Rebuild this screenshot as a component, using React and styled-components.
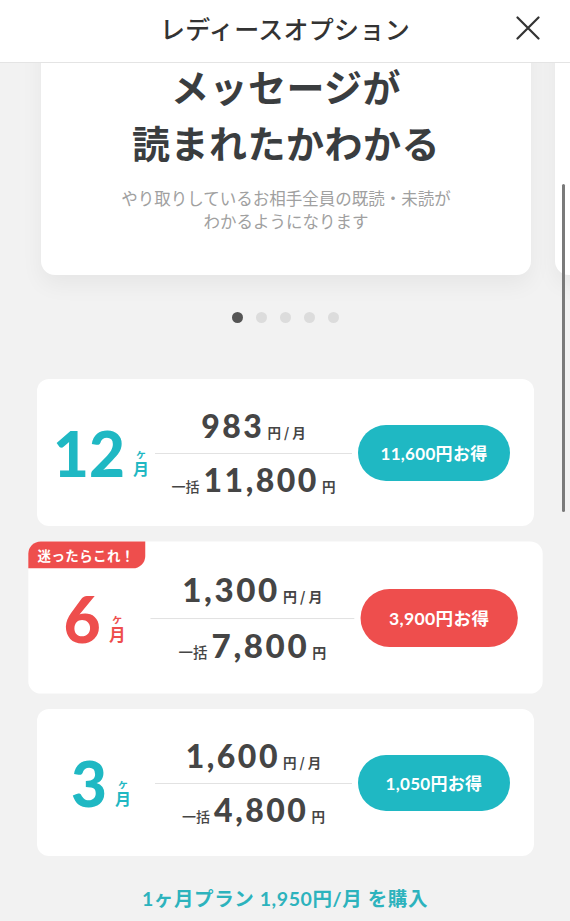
import React from "react";
import styled, { createGlobalStyle } from "styled-components";

const JP = `"Noto Sans CJK JP", "Noto Sans", sans-serif`;
const NUM = `Lato, "Noto Sans CJK JP", sans-serif`;
const TEAL = "#1fb8c3";
const RED = "#ee4e4d";

const plans = [
  { months: "12", monthly: "983", total: "11,800", saving: "11,600円お得", color: TEAL },
  { months: "6", monthly: "1,300", total: "7,800", saving: "3,900円お得", color: RED, badge: "迷ったらこれ！" },
  { months: "3", monthly: "1,600", total: "4,800", saving: "1,050円お得", color: TEAL },
];

const GlobalStyle = createGlobalStyle`
  * { box-sizing: border-box; }
  body {
    margin: 0;
    background: #f2f2f2;
    font-family: ${JP};
  }
`;

const App = () => {
  return (
    <>
      <GlobalStyle />
      <Screen>
        <Header>
          <span />
          <Title>レディースオプション</Title>
          <CloseButton aria-label="閉じる">
            <svg width="24" height="24" viewBox="0 0 24 24">
              <path d="M1.5 1.5 22.5 22.5M22.5 1.5 1.5 22.5" stroke="#333" strokeWidth="2.2" strokeLinecap="round" fill="none" />
            </svg>
          </CloseButton>
        </Header>

        <Viewport>
          <Content>
            <Carousel>
              <Slide>
                <SlideTitle>
                  メッセージが
                  <br />
                  読まれたかわかる
                </SlideTitle>
                <SlideText>
                  やり取りしているお相手全員の既読・未読が
                  <br />
                  わかるようになります
                </SlideText>
              </Slide>
              <Slide />
            </Carousel>

            <Dots>
              {[0, 1, 2, 3, 4].map((i) => (
                <Dot key={i} active={i === 0} />
              ))}
            </Dots>

            <PlanList>
              {plans.map((p) => (
                <PlanCard key={p.months} featured={!!p.badge}>
                  {p.badge && <Badge>{p.badge}</Badge>}
                  <Months color={p.color}>
                    <MonthNumber>{p.months}</MonthNumber>
                    <MonthUnit>
                      <small>ヶ</small>
                      <span>月</span>
                    </MonthUnit>
                  </Months>
                  <Prices>
                    <PriceRow>
                      <Amount>{p.monthly}</Amount>
                      <Unit>円 / 月</Unit>
                    </PriceRow>
                    <Divider />
                    <PriceRow>
                      <Prefix>一括</Prefix>
                      <Amount>{p.total}</Amount>
                      <Unit>円</Unit>
                    </PriceRow>
                  </Prices>
                  <SaveButton color={p.color}>{p.saving}</SaveButton>
                </PlanCard>
              ))}
            </PlanList>

            <MonthlyLink>1ヶ月プラン 1,950円/月 を購入</MonthlyLink>
          </Content>
          <ScrollIndicator />
        </Viewport>
      </Screen>
    </>
  );
};

const Screen = styled.div`
  width: 570px;
  height: 921px;
  display: flex;
  flex-direction: column;
  overflow: hidden;
  background: #f2f2f2;
`;

const Header = styled.header`
  flex-shrink: 0;
  height: 63px;
  padding-bottom: 6px;
  display: grid;
  grid-template-columns: 1fr auto 1fr;
  align-items: center;
  background: #fff;
  border-bottom: 1px solid #e4e4e4;
  position: relative;
  z-index: 2;
`;

const Title = styled.h1`
  margin: 0;
  font-size: 25px;
  font-weight: 500;
  color: #333;
  letter-spacing: 0.3px;
`;

const CloseButton = styled.button`
  justify-self: end;
  margin-right: 30px;
  padding: 0;
  border: 0;
  background: none;
  display: flex;
  cursor: pointer;
`;

const Viewport = styled.div`
  flex: 1;
  overflow: hidden;
  position: relative;
`;

const Content = styled.div`
  margin-top: -40px;
`;

const Carousel = styled.div`
  display: flex;
  gap: 24px;
  padding-left: 41px;
`;

const Slide = styled.div`
  flex-shrink: 0;
  width: 490px;
  padding: 35px 20px 42px;
  background: #fff;
  border-radius: 14px;
  box-shadow: 0 10px 22px rgba(0, 0, 0, 0.05);
  text-align: center;
`;

const SlideTitle = styled.h2`
  margin: 0;
  font-size: 38px;
  line-height: 56px;
  font-weight: 700;
  color: #3a3d3f;
  letter-spacing: 0.5px;
`;

const SlideText = styled.p`
  margin: 17px 0 0;
  font-size: 16.5px;
  line-height: 23px;
  color: #a0a0a0;
`;

const Dots = styled.div`
  display: flex;
  justify-content: center;
  gap: 13px;
  margin-top: 37px;
`;

const Dot = styled.span`
  width: 11px;
  height: 11px;
  border-radius: 50%;
  background: ${({ active }) => (active ? "#555" : "#dcdcdc")};
`;

const PlanList = styled.div`
  display: flex;
  flex-direction: column;
  gap: 18px;
  margin: 56px 36px 0 37px;
`;

const PlanCard = styled.div`
  position: relative;
  height: 147px;
  display: grid;
  grid-template-columns: 104px 197px 152px;
  column-gap: 6px;
  align-items: center;
  padding: 0 24px 0 8px;
  background: #fff;
  border-radius: 12px;
  transform: ${({ featured }) => (featured ? "scale(1.035)" : "none")};
`;

const Badge = styled.span`
  position: absolute;
  top: 0;
  left: 0;
  height: 26px;
  padding: 0 10px 0 9px;
  display: flex;
  align-items: center;
  background: ${RED};
  color: #fff;
  font-size: 13px;
  font-weight: 700;
  letter-spacing: 0.4px;
  border-radius: 12px 0 12px 0;
`;

const Months = styled.div`
  display: flex;
  justify-content: center;
  align-items: flex-end;
  gap: 8px;
  padding-left: 8px;
  color: ${({ color }) => color};
`;

const MonthNumber = styled.span`
  font-family: ${NUM};
  font-size: 62px;
  font-weight: 900;
  line-height: 62px;
`;

const MonthUnit = styled.span`
  display: flex;
  flex-direction: column;
  align-items: center;
  font-weight: 700;
  padding-bottom: 7px;

  small {
    font-size: 11px;
    line-height: 13px;
  }
  span {
    font-size: 16px;
    line-height: 17px;
  }
`;

const Prices = styled.div`
  display: flex;
  flex-direction: column;
  color: #454545;
`;

const PriceRow = styled.div`
  display: flex;
  justify-content: center;
  align-items: baseline;
  height: 40px;
`;

const Amount = styled.span`
  font-family: ${NUM};
  font-size: 32px;
  line-height: 40px;
  font-weight: 900;
  letter-spacing: 2.5px;
`;

const Unit = styled.span`
  margin-left: 3px;
  font-size: 13.5px;
  font-weight: 700;
`;

const Prefix = styled.span`
  margin-right: 4px;
  font-size: 14px;
  font-weight: 500;
`;

const Divider = styled.hr`
  width: 100%;
  margin: 7px 0 6px;
  border: 0;
  border-top: 1px solid #e2e2e2;
`;

const SaveButton = styled.button`
  height: 56px;
  border: 0;
  border-radius: 28px;
  background: ${({ color }) => color};
  color: #fff;
  font-family: ${NUM};
  font-size: 17px;
  font-weight: 700;
  letter-spacing: 0.3px;
  cursor: pointer;
`;

const MonthlyLink = styled.a`
  display: block;
  margin-top: 31px;
  text-align: center;
  font-family: ${NUM};
  font-size: 19.5px;
  line-height: 24px;
  font-weight: 700;
  letter-spacing: 0.6px;
  color: #2db3bd;
  cursor: pointer;
`;

const ScrollIndicator = styled.span`
  position: absolute;
  top: 121px;
  right: 5px;
  width: 3.5px;
  height: 328px;
  border-radius: 2px;
  background: #7a7a7a;
`;

export default App;
